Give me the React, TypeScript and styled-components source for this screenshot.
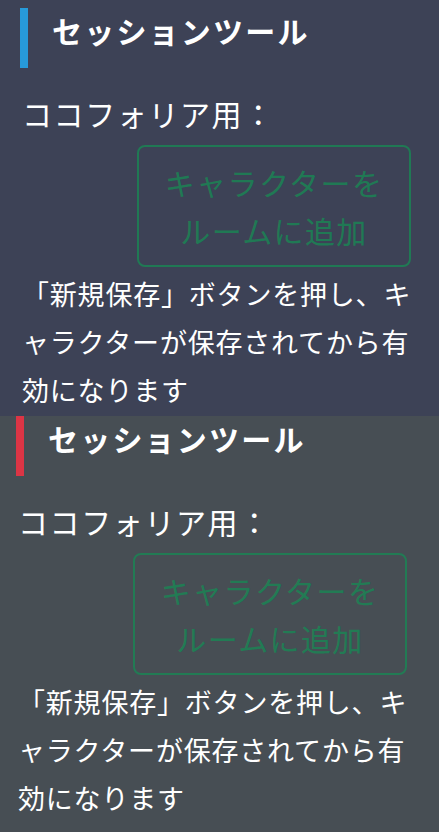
import React, { FunctionComponent } from 'react'
import styled, { createGlobalStyle } from 'styled-components'

const GlobalStyle = createGlobalStyle`
  html, body {
    margin: 0;
    padding: 0;
    background: #474e54;
  }
  body {
    font-family: "Noto Sans CJK JP", "Noto Sans", sans-serif;
    color: #ffffff;
  }
`

type Tone = 'primary' | 'danger'

const palette: Record<Tone, { bg: string; bar: string }> = {
  primary: { bg: '#3d4256', bar: '#279ad9' },
  danger: { bg: '#474e54', bar: '#dc3545' }
}

// the second block sits 4px further left and starts without top padding
const StyledSection = styled.section<{ tone: Tone; shift: number }>`
  display: flex;
  flex-direction: column;
  background: ${(props) => palette[props.tone].bg};
  padding: ${(props) => (props.shift ? '0 32px 0 16px' : '8px 28px 2px 20px')};
  box-sizing: border-box;
  height: 416px;
`

const Heading = styled.h2<{ tone: Tone }>`
  margin: 0;
  height: 60px;
  box-sizing: border-box;
  border-left: 8px solid ${(props) => palette[props.tone].bar};
  padding: 4px 0 0 24px;
  font-size: 30px;
  line-height: 36px;
  font-weight: 700;
  letter-spacing: 2.2px;
`

const Label = styled.p`
  margin: 21px 0 0 2px;
  font-size: 30px;
  line-height: 48px;
  letter-spacing: 1.6px;
`

const ButtonRow = styled.div`
  display: flex;
  justify-content: flex-end;
  margin-top: 8px;
`

const AddButton = styled.button`
  width: 274px;
  padding: 11px 20px;
  background: transparent;
  border: 2px solid #198754;
  border-radius: 8px;
  color: #198754;
  opacity: 0.8;
  font-family: inherit;
  font-size: 30px;
  line-height: 48px;
  letter-spacing: 1.4px;
  text-align: center;
  cursor: default;
`

const Note = styled.p`
  margin: 3px -10px 0 2px;
  font-size: 27px;
  line-height: 48px;
  letter-spacing: 0.8px;
  line-break: loose;
`

const SessionTools: FunctionComponent<{ tone: Tone; shift?: number }> = ({ tone, shift = 0 }) => {
  return (
    <StyledSection tone={tone} shift={shift}>
      <Heading tone={tone}>セッションツール</Heading>
      <Label>ココフォリア用：</Label>
      <ButtonRow>
        <AddButton disabled>キャラクターをルームに追加</AddButton>
      </ButtonRow>
      <Note>「新規保存」ボタンを押し、キャラクターが保存されてから有効になります</Note>
    </StyledSection>
  )
}

export default function App() {
  return (
    <>
      <GlobalStyle />
      <SessionTools tone="primary" />
      <SessionTools tone="danger" shift={4} />
    </>
  )
}
